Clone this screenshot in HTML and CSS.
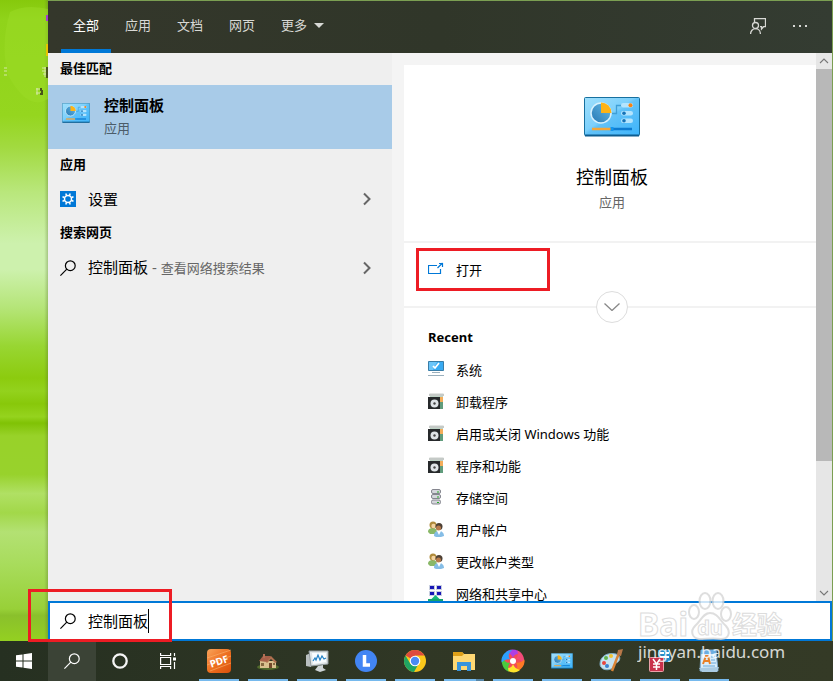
FILE: index.html
```html
<!DOCTYPE html>
<html lang="zh-CN">
<head>
<meta charset="utf-8">
<title>控制面板</title>
<link rel="stylesheet" href="styles.css">
</head>
<body>
<svg class="defs" aria-hidden="true">
  <defs>
    <linearGradient id="sky" x1="0" y1="0" x2="1" y2="1"><stop offset="0" stop-color="#9fe0fd"/><stop offset=".45" stop-color="#7dd0fb"/><stop offset=".5" stop-color="#62c2f8"/><stop offset="1" stop-color="#3db4fb"/></linearGradient>
    <linearGradient id="pie" x1="0" y1="1" x2="1" y2="0"><stop offset="0" stop-color="#2678b4"/><stop offset="1" stop-color="#67bce8"/></linearGradient>
    <linearGradient id="pdf" x1="0" y1="0" x2="1" y2="1"><stop offset="0" stop-color="#f9a45c"/><stop offset=".5" stop-color="#ee7020"/><stop offset="1" stop-color="#d9500c"/></linearGradient>
    <path id="petal" d="M-7-9C-3-13 6-12 9-6 5-8 1-7 0-3-1-6-3-8-7-9z"/>
    <symbol id="panel" viewBox="0 0 56 40">
      <rect x=".5" y=".5" width="55" height="38" rx="1" fill="url(#sky)" stroke="#17709f"/>
      <path d="M1 38.500h54" stroke="#0d5d90" stroke-width="2"/>
      <circle cx="17" cy="16" r="10" fill="url(#pie)" stroke="#d8f1fd" stroke-width="1.500"/>
      <path d="M17 5.500a10.500 10.500 0 0 1 10.500 10.500H17z" fill="#fdb316"/>
      <path d="M28 16.500h4.500v-8H38" fill="none" stroke="#3f9fd6" stroke-width="1.300"/>
      <g fill="#b4e4fd"><rect x="37" y="6" width="12" height="4.500" rx="2.200"/><rect x="37" y="14" width="12" height="4.500" rx="2.200"/><rect x="37" y="21.500" width="12" height="4.500" rx="2.200"/></g>
      <circle cx="46.500" cy="8.200" r="2" fill="#f68213"/><circle cx="40" cy="16.200" r="1.800" fill="#1673b8"/><circle cx="40" cy="23.800" r="1.800" fill="#1673b8"/>
      <path d="M8 32h19" stroke="#f3a63a" stroke-width="2.500"/><path d="M29 32h19" stroke="#0d7bd0" stroke-width="2.500"/><rect x="26.500" y="30" width="3" height="4" fill="#1495ee"/>
    </symbol>
    <symbol id="lens" viewBox="0 0 16 16"><circle cx="10.300" cy="5.700" r="4.900" fill="none" stroke="currentColor" stroke-width="1.200"/><path d="M6.800 9.200.4 15.600" fill="none" stroke="currentColor" stroke-width="1.200"/></symbol>
    <symbol id="chevron" viewBox="0 0 10 14"><path d="m2 1.500 5.500 5.500L2 12.500" fill="none" stroke="#666" stroke-width="2"/></symbol>
    <symbol id="programs" viewBox="0 0 16 16">
      <path d="M1 1h15v2H1z" fill="#c5cac7"/><path d="M2 0h13l1 1H1z" fill="#e4e6e4"/>
      <path d="M2 3h13v13H2z" fill="#bdd2c5"/><path d="M10 4h5v7h-4z" fill="#f3ad5a"/><path d="M12 9h3v7h-3z" fill="#609c7c"/>
      <path d="M0 4h12v12H0z" fill="#26292b"/><circle cx="6.500" cy="10.500" r="4" fill="#dfe4e7"/><circle cx="6.500" cy="10.500" r="1.200" fill="#444"/>
    </symbol>
    <symbol id="users" viewBox="0 0 16 16">
      <path d="M0 11c0-3 2-4 5-4s4 2 4 6H2z" fill="#8ab868"/><circle cx="5" cy="4" r="3.500" fill="#b08b3c"/><circle cx="5.500" cy="5" r="2.200" fill="#f4d3a0"/>
      <path d="M6 15c0-4 2-5 5-5s5 2 5 5l-3 1H8z" fill="#85bde6"/><path d="m9 10 2 4 2-4z" fill="#fff"/><circle cx="11" cy="5.500" r="3.500" fill="#4d4034"/><circle cx="10.500" cy="7" r="2.500" fill="#b87b4c"/>
    </symbol>
  </defs>
</svg>
<main class="desktop">
  <div class="wallpaper" aria-hidden="true">
    <svg class="smudges" viewBox="0 0 48 110"><path d="M10 12Q25 4 48 9v90Q28 112 8 75 0 45 10 12z" fill="#9bdb25" opacity=".5"/><path d="M46 15h2v6h-2z" fill="#a43bd0"/><path d="M46 44h2v12h-2z" fill="#e8c400"/><path d="M42 68h5m-5 3h5m-4 3h5m-3-7v10M36 89h5m-5 4h4m-3-5v7M4 68h3m-3 3h3m-3 4h3" stroke="#d5e8a7" fill="none"/><path d="M47 67v11M41 88v3m1-1v5m-2-1h3" stroke="#48551a" stroke-width="2" fill="none"/></svg>
  </div>
  <section class="flyout">
    <header class="tabs">
      <nav class="tab-list">
        <button class="tab active">全部</button><button class="tab">应用</button><button class="tab">文档</button><button class="tab">网页</button><button class="tab">更多<svg class="caret-down" viewBox="0 0 10 5"><path d="M0 0h10L5 5z" fill="currentColor"/></svg></button>
      </nav>
      <button class="tool" aria-label="反馈"><svg width="16" height="16" viewBox="0 0 16 16" fill="none" stroke="currentColor" stroke-width="1.300"><path d="M4.500 4V.7h11v8H13.500L11.500 11V8.700H10"/><circle cx="5.500" cy="7.500" r="3"/><path d="M.6 16c0-3 2-5.300 4.900-5.300S10.400 13 10.400 16"/></svg></button>
      <button class="tool" aria-label="选项"><svg width="14" height="2" viewBox="0 0 14 2" fill="currentColor"><path d="M0 0h2v2H0zM6 0h2v2H6zM12 0h2v2h-2z"/></svg></button>
    </header>
    <div class="content">
      <div class="results">
        <h2 class="group">最佳匹配</h2>
        <button class="best"><svg class="best-icon"><use href="#panel"/></svg><span class="best-text"><strong>控制面板</strong><small>应用</small></span></button>
        <h2 class="group">应用</h2>
        <button class="result"><svg class="icon" viewBox="0 0 16 16"><path d="M0 0h16v16H0z" fill="#0078d7"/><circle cx="8" cy="8" r="3.500" fill="none" stroke="#fff" stroke-width="1.500"/><path d="M6.500 4.500 5.800 2.500M9.500 4.500l.7-2M6.500 11.500l-.7 2M9.500 11.500l.7 2M4.500 6.500l-2-.7M4.500 9.500l-2 .7M11.500 6.500l2-.7M11.500 9.500l2 .7" stroke="#fff" stroke-width="1.500"/></svg><span>设置</span><svg class="go"><use href="#chevron"/></svg></button>
        <h2 class="group">搜索网页</h2>
        <button class="result"><svg class="icon"><use href="#lens"/></svg><span>控制面板<span class="dash"> - </span><small>查看网络搜索结果</small></span><svg class="go"><use href="#chevron"/></svg></button>
      </div>
      <div class="detail">
        <div class="hero"><svg class="hero-icon"><use href="#panel"/></svg><h1>控制面板</h1><p>应用</p></div>
        <div class="actions">
          <button class="open"><svg class="icon" viewBox="0 0 16 16" fill="none" stroke="#0078d7"><path d="M9 3.500H.5v8h12V7" stroke-width="1.200"/><path d="m9.500 6 5-5M11 1.500h3.500V5" stroke-width="1.200"/></svg><span>打开</span></button>
          <button class="expand" aria-label="展开"><svg width="16" height="8" viewBox="0 0 16 8"><path d="m.5.500 7.500 7 7.500-7" fill="none" stroke="#888" stroke-width="1.300"/></svg></button>
        </div>
        <div class="recent">
          <h2>Recent</h2>
          <ul>
            <li><svg class="icon" viewBox="0 0 16 16"><path d="M.5.500h15v9H.5z" fill="#38aaf2" stroke="#397da7"/><path d="M1 1h8L5 9H1z" fill="#6bc5f9"/><path d="m5 5 2 2 4-5" fill="none" stroke="#fff" stroke-width="1.700"/><path d="M4 11.500h8M0 14.500h16" stroke="#9aafbc"/></svg><a href="#">系统</a></li>
            <li><svg class="icon"><use href="#programs"/></svg><a href="#">卸载程序</a></li>
            <li><svg class="icon"><use href="#programs"/></svg><a href="#">启用或关闭 Windows 功能</a></li>
            <li><svg class="icon"><use href="#programs"/></svg><a href="#">程序和功能</a></li>
            <li><svg class="icon" viewBox="0 0 16 16"><g fill="#d5d6dc" stroke="#85868f"><rect x="3.500" y=".5" width="9" height="4" rx="1.500"/><rect x="3.500" y="5.500" width="9" height="4" rx="1.500"/><rect x="3.500" y="11" width="9" height="4" rx="1.500"/></g><path d="M9 3h2M9 8h2M9 13.500h2" stroke="#26ac27"/></svg><a href="#">存储空间</a></li>
            <li><svg class="icon"><use href="#users"/></svg><a href="#">用户帐户</a></li>
            <li><svg class="icon"><use href="#users"/></svg><a href="#">更改帐户类型</a></li>
            <li><svg class="icon" viewBox="0 0 16 16"><path d="M1 0h6v5H1zM8 0h6v5H8zM1 6h6v5H1zM8 6h6v5H8z" fill="#c9cfe0"/><path d="M2 1h4v3H2zM9 1h4v3H9zM2 7h4v3H2zM9 7h4v3H9z" fill="#1717b5"/><path d="m7.500 10 4 4h-2v2h-4v-2h-2z" fill="#14b978"/><path d="M0 15h15" stroke="#14a46c" stroke-width="2"/></svg><a href="#">网络和共享中心</a></li>
          </ul>
        </div>
      </div>
      <div class="scrollbar" aria-hidden="true">
        <svg viewBox="0 0 16 16"><path d="m4 10 4-4 4 4" fill="none" stroke="#777" stroke-width="1.100"/></svg>
        <div class="track"><div class="thumb"></div></div>
        <svg viewBox="0 0 16 16"><path d="m4 6 4 4 4-4" fill="none" stroke="#777" stroke-width="1.100"/></svg>
      </div>
    </div>
    <label class="search"><svg class="icon"><use href="#lens"/></svg><input type="text" value="控制面板" aria-label="搜索"><span class="cursor"></span></label>
  </section>
</main>
<footer class="taskbar">
  <button class="sys" aria-label="开始"><svg width="16" height="16" viewBox="0 0 16 16" fill="#fff"><path d="M0 2.300 6.500 1.400v6.100H0zM7.500 1.200 16 0v7.500H7.500zM0 8.500h6.500v6.100L0 13.700zM7.500 8.500H16V16l-8.500-1.200z"/></svg></button>
  <button class="sys lit" aria-label="搜索"><svg width="16" height="16"><use href="#lens"/></svg></button>
  <button class="sys" aria-label="Cortana"><svg width="16" height="16" viewBox="0 0 16 16"><circle cx="8" cy="8" r="6.700" fill="none" stroke="#f5f5f5" stroke-width="2.300"/></svg></button>
  <button class="sys" aria-label="任务视图"><svg width="16" height="16" viewBox="0 0 16 16" fill="none" stroke="#fff" stroke-width="1.200"><path d="M.6 0v2.500h10V0M.6 16v-2.500h10V16M.6 4.500h10v7H.6zM14.500 0v3M14.500 9v7"/><path d="M13 4.500h3v3h-3z" fill="#fff" stroke="none"/></svg></button>
  <div class="apps">
    <button class="app" aria-label="PDF"><svg viewBox="0 0 24 24"><rect width="24" height="24" rx="4" fill="url(#pdf)"/><path d="M0 9 24 1M0 16 24 7M3 22 24 14" stroke="#fbb270" opacity=".6"/><text class="pdf-text" x="12" y="16" transform="rotate(-18 12 12)">PDF</text></svg></button>
    <button class="app" aria-label="农场"><svg viewBox="0 0 24 24"><ellipse cx="12" cy="18" rx="11" ry="3" fill="#526a2c"/><path d="M4 12h16v7H4z" fill="#d9c08f"/><path d="m3 12 4-5h8l-4 6z" fill="#a8604a"/><path d="m10 13 5-6 6 6-2 1-4-4-4 4z" fill="#b0704f"/><path d="M13 14h3v5h-3z" fill="#72482b"/><path d="M5 14h3v3H5zM17 14h2v2h-2z" fill="#876a42"/><path d="M7 5h2v4H7z" fill="#b36f55"/></svg></button>
    <button class="app" aria-label="资源监视器"><svg viewBox="0 0 24 24"><path d="m1 6 5-2v14l-5-1z" fill="#b9bfc0"/><path d="M4 2h19v13l-17 2z" fill="#dfe5e7" stroke="#929b9f"/><path d="M7 4h14v9L8 15z" fill="#f8fcff"/><path d="m8 12 2-3 1 2 2-5 2 5 2-4 2 3 2-1" fill="none" stroke="#2381c4" stroke-width="1.200"/><path d="m13 17 5-1v3l3 2-6 2-5-2z" fill="#cdd3d5"/></svg></button>
    <button class="app" aria-label="时钟"><svg viewBox="0 0 24 24"><circle cx="12" cy="12" r="11" fill="#4285f4"/><path d="M10.500 6v10H16" fill="none" stroke="#fff" stroke-width="3.500"/></svg></button>
    <button class="app" aria-label="Chrome"><svg viewBox="0 0 24 24"><circle cx="12" cy="12" r="11" fill="#fbc91b"/><path d="M12 12 2.500 6.500A11 11 0 0 1 21.500 6.500H12z" fill="#dd4b3e"/><path d="M2.500 6.500A11 11 0 0 0 11 23l5-9-8.500 1z" fill="#1fa463"/><circle cx="12" cy="12" r="5.300" fill="#fff"/><circle cx="12" cy="12" r="4.200" fill="#4a8af4"/></svg></button>
    <button class="app grouped" aria-label="文件资源管理器"><svg viewBox="0 0 24 24"><path d="M1 3h9l2 2h11v16H1z" fill="#ffd873"/><path d="M1 3h9l2 2-2 2H1z" fill="#dfa018"/><path d="M5 13h14v9h-4v-5H9v5H5z" fill="#3994dc"/></svg></button>
    <button class="app" aria-label="照片"><svg viewBox="-12 -12 24 24"><circle r="9" fill="#f34b58"/><use href="#petal" fill="#ae3fe5"/><use href="#petal" fill="#f34b78" transform="rotate(60)"/><use href="#petal" fill="#ff7a25" transform="rotate(120)"/><use href="#petal" fill="#ffe42b" transform="rotate(180)"/><use href="#petal" fill="#4bc93e" transform="rotate(240)"/><use href="#petal" fill="#2d9fff" transform="rotate(300)"/><circle r="3" fill="#fff"/></svg></button>
    <button class="app" aria-label="控制面板"><svg class="small-panel"><use href="#panel"/></svg></button>
    <button class="app" aria-label="画图"><svg viewBox="0 0 24 24"><path d="M1 15C1 7 9 3 17 5c6 2 4 8 0 9-3 1-1 5-5 6-5 2-11 0-11-5z" fill="#c6e2f0" stroke="#7eacc5"/><circle cx="5" cy="14" r="2" fill="#e7443e"/><circle cx="7" cy="9" r="2" fill="#62b34c"/><circle cx="12" cy="7" r="2" fill="#f2c432"/><circle cx="8" cy="17" r="2" fill="#3c82d0"/><path d="m20 4-7 18" stroke="#da8436" stroke-width="2.500"/><path d="m18 6 1-5 5-1-2 7z" fill="#b87849"/></svg></button>
    <button class="app" aria-label="财务"><svg viewBox="0 0 24 24"><path d="M10 1h12v12H10z" fill="#278ac5"/><path d="M12 4h4m2 0h3M12 8h9" stroke="#fff" stroke-width="2"/><rect x="1.500" y="8.500" width="14" height="14" rx="1" fill="#c9324c" stroke="#eba1a8"/><path d="m5 10 3.500 5L12 10M8.500 15v6M5 15h7m-7 3h7" fill="none" stroke="#fff" stroke-width="1.500"/></svg></button>
    <button class="app" aria-label="写字板"><svg viewBox="0 0 24 24"><path d="M4 1h15l2 21H3z" fill="#d9edfc" stroke="#7aa9cf"/><path d="M4 1h15v4H4z" fill="#6daee1"/><path d="M14 8h4m-4 3h4m-4 3h5M6 17h12" stroke="#6ba7d8"/><path d="m2 19 20-1-2 5H5z" fill="#aacbe3"/><path d="m6 15 3-8h2l2 8M7 12h5" fill="none" stroke="#e88028" stroke-width="2"/></svg></button>
  </div>
</footer>
<div class="mark search-mark" aria-hidden="true"></div>
<div class="watermark" aria-hidden="true">
  <div class="brand"><b>Bai</b><span class="paw"><svg viewBox="0 0 44 48"><g fill="#fff" stroke="#d7d7d7" stroke-width="2"><ellipse cx="17" cy="9" rx="5.500" ry="8"/><ellipse cx="30" cy="9" rx="5.500" ry="8"/><ellipse cx="6" cy="20" rx="5" ry="7"/><ellipse cx="38" cy="22" rx="5" ry="7"/><path d="M22 21c-7 0-9 8-15 13-5 5-3 12 4 13 7 0 15-1 22 0 8 0 10-7 5-13-6-5-8-13-16-13z"/></g></svg><b>du</b></span><b class="cn">经验</b></div>
  <div class="site">jingyan.baidu.com</div>
</div>
</body>
</html>
```
FILE: styles.css
```css
* { box-sizing: border-box; }
html { height: 100%; }
body {
  position: relative;
  display: flex;
  flex-direction: column;
  height: 100%;
  margin: 0;
  overflow: hidden;
  color: #000;
  font: 13px/20px "Noto Sans", "Noto Sans CJK SC", sans-serif;
}
button, input { font: inherit; color: inherit; border: 0; padding: 0; background: none; }
h1, h2, p, ul { margin: 0; padding: 0; font-size: 13px; }
svg { display: block; flex: none; }
small { font-size: 13px; color: #666; }
.defs { position: absolute; width: 0; height: 0; }
.icon { width: 16px; height: 16px; }

.desktop { display: flex; flex: 1; min-height: 0; padding: 1px 1px 0 0; background: #7b9f52; }
.wallpaper {
  flex: none;
  width: 48px;
  margin-top: -1px;
  background:
    linear-gradient(90deg, transparent 92%, #52702b55),
    linear-gradient(#86c90c, #90d31a 3%, #95d61f 18%, #a2da40 23%, #b9e77c 30%, #cdf1ad 38%, #cdf1ad 42%, #b5e578 48%, #98d632 54%, #8ccb0e 59%, #93d21d 61%, #88c80a 63%, #95d31e 65%, #80c205 66%, #98d229 68%, #98d22c 74%, #b0e064 77%, #a2d849 80%, #b3e173 83%, #a8dc5c 88%, #98d038 95%, #8ac02c 96%, #94d021);
}
.smudges { width: 48px; height: 110px; }
.flyout { display: flex; flex: 1; flex-direction: column; min-width: 0; }

.tabs { display: flex; flex: none; height: 52px; padding-right: 11px; color: #d8d9d5; background: linear-gradient(90deg, #34372b, #303629 50%, #343c32); }
.tab-list { display: flex; flex: 1; gap: 2px; padding-left: 13px; }
.tab { display: flex; align-items: center; justify-content: center; gap: 7px; padding: 0 12px; border-bottom: 4px solid transparent; }
.active { color: #fff; border-bottom-color: #0078d7; }
.caret-down { width: 10px; height: 5px; }
.tool { display: grid; place-items: center; width: 42px; padding-bottom: 2px; }

.content { display: flex; flex: 1; min-height: 0; background: #f4f4f4; }
.results { display: flex; flex: 344; flex-direction: column; background: #efefef; }
.group { padding: 5px 12px 7px; }
.best { display: flex; align-items: flex-start; gap: 14px; padding: 9px 14px 11px; text-align: left; background: #a8cbe8; }
.best-icon { width: 28px; height: 20px; margin-top: 9px; }
.best-text { display: grid; gap: 2px; }
.best strong { font-size: 15px; line-height: 22px; }
.best small { color: #4c5c69; }
.result { display: flex; align-items: center; gap: 12px; padding: 7px 20px 7px 12px; font-size: 15px; line-height: 22px; text-align: left; }
.dash { color: #666; }
.go { width: 10px; height: 14px; margin-left: auto; }

.detail { display: flex; flex: 412; flex-direction: column; min-width: 0; margin: 12px 0 0 12px; overflow: hidden; background: #fff; }
.hero { display: flex; flex: none; flex-direction: column; align-items: center; height: 176px; padding: 32px 0 0 4px; }
.hero-icon { width: 56px; height: 40px; margin-bottom: 27px; }
.hero h1 { font-size: 18px; font-weight: 400; line-height: 26px; }
.hero p { margin-top: 2px; color: #666; }
.actions { position: relative; flex: none; height: 67px; padding: 5px 12px; border: solid #f2f2f2; border-width: 2px 0; }
.open { display: flex; align-items: center; gap: 12px; width: 134px; height: 43px; padding-left: 9px; border: 3px solid #ed1c24; }
.expand { position: absolute; bottom: -17px; left: calc(50% - 14px); display: grid; place-items: center; width: 32px; height: 32px; border: 1px solid #ddd; border-radius: 50%; background: #fff; }
.recent { padding: 19px 24px 0; }
.recent ul { padding-top: 7px; list-style: none; }
.recent li { display: flex; align-items: center; gap: 12px; height: 32px; }
.recent .icon { margin-bottom: 2px; }
.recent a { color: inherit; text-decoration: none; }

.scrollbar { display: flex; flex: none; flex-direction: column; width: 16px; background: #e6e6e6; }
.track { flex: 1; }
.thumb { height: 76%; background: #b8b8b8; }

.search { display: flex; flex: none; align-items: center; height: 40px; padding-left: 10px; border: 2px solid #0078d7; background: #fff; }
.search input { width: 60px; margin-left: 12px; outline: 0; font-size: 15px; field-sizing: content; }
.cursor { width: 1px; height: 24px; background: #000; }

.taskbar { display: flex; flex: none; height: 40px; color: #fff; background: linear-gradient(90deg, #263021, #303725 50%, #343a26); }
.sys { display: grid; place-items: center; width: 48px; }
.lit { background: #3b4336; }
.apps { display: flex; gap: 9px; margin-left: 7px; }
.app { display: grid; place-items: center; width: 40px; padding-top: 2px; border-bottom: 2px solid #76b9ed; }
.grouped { border-image: linear-gradient(90deg, #76b9ed 78%, #5685a6 78%) 2; }
.app svg { width: 24px; height: 24px; }
.app .small-panel { width: 22px; height: 16px; }
.pdf-text { font: bold 10px "Noto Sans", sans-serif; text-anchor: middle; fill: #fff; }

.mark { position: absolute; border: 3px solid #ed1c24; }
.search-mark { bottom: 39px; left: 28px; width: 144px; height: 53px; }
.watermark { position: absolute; right: 43px; bottom: 17px; width: 152px; color: #fff; opacity: .8; pointer-events: none; }
.brand { display: flex; align-items: flex-end; height: 48px; font-size: 32px; line-height: 32px; -webkit-text-stroke: 1px #d4d4d4; }
.paw { position: relative; width: 44px; height: 48px; }
.paw svg { width: 44px; height: 48px; }
.paw b { position: absolute; right: 0; bottom: 0; left: 0; font-size: 20px; line-height: 24px; text-align: center; }
.cn { font-size: 25px; }
.site { font-size: 17px; line-height: 24px; }
```
